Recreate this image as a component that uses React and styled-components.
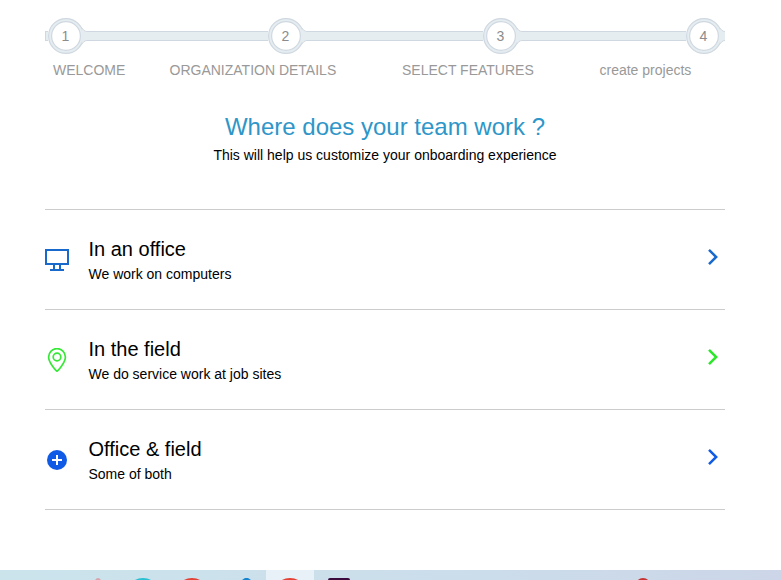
import React from "react";
import styled, { createGlobalStyle } from "styled-components";

const Global = createGlobalStyle`
  * { box-sizing: border-box; }
  body { margin: 0; background: #fff; font-family: "Liberation Sans", Arial, sans-serif; }
`;

const Page = styled.div`
  height: 580px;
  display: flex;
  flex-direction: column;
  overflow: hidden;
`;

const Content = styled.main`
  width: 680px;
  margin-left: 45px;
  padding-top: 18px;
  flex: 1;
`;

const Track = styled.div`
  display: flex;
  align-items: center;
  height: 36px;
`;

const Bar = styled.div`
  flex: none;
  height: 10px;
  width: ${(p) => p.$width}px;
  background: #e6edf1;
  border: solid #cfd8e0;
  border-width: 1px 0;
  border-left-width: ${(p) => (p.$start ? "1px" : 0)};
`;

const Marker = styled.div`
  position: relative;
  width: 39px;
  height: 36px;
  flex: none;
`;

const MarkerShape = styled.svg`
  display: block;
`;

const MarkerNumber = styled.span`
  position: absolute;
  inset: 0 4px 0 0;
  text-align: center;
  font-size: 14px;
  line-height: 36px;
  color: #8c8c8c;
`;

const Labels = styled.div`
  display: flex;
  height: 32px;
  font-size: 14px;
  line-height: 32px;
  color: #999;
  white-space: nowrap;
`;

const Label = styled.span`
  width: ${(p) => p.$width}px;
  margin-left: ${(p) => p.$gap}px;
`;

const Heading = styled.h1`
  margin: 26px 0 0;
  font-size: 24px;
  line-height: 30px;
  font-weight: 400;
  text-align: center;
  color: #2e96c8;
`;

const Subheading = styled.p`
  margin: 5px 0 0;
  font-size: 14px;
  line-height: 16px;
  text-align: center;
  color: #000;
`;

const Options = styled.div`
  margin-top: 46px;
  border-top: 1px solid #ccc;
`;

const Option = styled.div`
  display: flex;
  height: 100px;
  border-bottom: 1px solid #ccc;
`;

const IconBox = styled.div`
  width: 24px;
  height: 24px;
  margin: 38px 19.5px 0 0;
  svg { display: block; }
`;

const OptionText = styled.div`
  flex: 1;
  padding-top: 27px;
  color: #000;
`;

const OptionTitle = styled.div`
  font-size: 20px;
  line-height: 24px;
`;

const OptionDetail = styled.div`
  margin-top: 5px;
  font-size: 14px;
  line-height: 16px;
`;

const Chevron = styled.svg`
  margin: 38px 6px 0 0;
  flex: none;
`;

const Taskbar = styled.footer`
  display: flex;
  height: 10px;
  padding-left: 70px;
  background: linear-gradient(90deg, #cbe4ec, #cbdfeb 45%, #ccd6e8);
`;

const TaskSlot = styled.div`
  width: 48px;
  margin-left: ${(p) => p.$gap ?? 1}px;
  background: ${(p) => (p.$active ? "#e8f1f8" : "transparent")};
  svg { display: block; }
`;

function StepMarker({ n }) {
  return (
    <Marker>
      <MarkerShape width="39" height="36" viewBox="0 0 39 36">
        <circle cx="18" cy="18" r="17.4" fill="#e6edf1" stroke="#cfd8e1" strokeWidth="1.2" />
        <path d="M33.5 10C35 11.5 36.5 13.5 39 13.5V22.5C36.5 22.5 35 24.5 33.5 26Z" fill="#e6edf1" />
        <path d="M33.5 9.5C35 11.5 36.5 13.5 39 13.5M39 22.5C36.5 22.5 35 24.5 33.5 26.5" fill="none" stroke="#cfd8e1" />
        <circle cx="18" cy="18" r="14.4" fill="#fff" stroke="#cfd8e1" strokeWidth="1.2" />
      </MarkerShape>
      <MarkerNumber>{n}</MarkerNumber>
    </Marker>
  );
}

const Monitor = () => (
  <svg width="24" height="24" viewBox="0 0 24 24" fill="#176acb">
    <path fillRule="evenodd" d="M0 1H24V17H16V21H19V23H5V21H8V17H0ZM2 3V15H22V3ZM10 17V21H14V17Z" />
  </svg>
);

const Pin = () => (
  <svg width="24" height="24" viewBox="0 0 24 24" fill="none" stroke="#36e836" strokeWidth="1.7">
    <path d="M12 23.2C10.5 22.5 3.6 14.2 3.6 9A8.4 8.4 0 0 1 20.4 9C20.4 14.2 13.5 22.5 12 23.2Z" />
    <circle cx="12" cy="9" r="3.8" />
  </svg>
);

const Plus = () => (
  <svg width="24" height="24" viewBox="0 0 24 24">
    <circle cx="12" cy="12" r="10" fill="#105be6" />
    <path d="M7 12H17M12 7V17" stroke="#fff" strokeWidth="2" />
  </svg>
);

const options = [
  { title: "In an office", detail: "We work on computers", icon: <Monitor />, color: "#176acb" },
  { title: "In the field", detail: "We do service work at job sites", icon: <Pin />, color: "#2be62b" },
  { title: "Office & field", detail: "Some of both", icon: <Plus />, color: "#105be6" },
];

const Dome = ({ color, x = 24, rx = 11 }) => (
  <svg width="48" height="10" viewBox="0 0 48 10">
    <ellipse cx={x} cy="19" rx={rx} ry="11" fill={color} />
  </svg>
);

export default function App() {
  return (
    <Page>
      <Global />
      <Content>
        <Track>
          <Bar $width={3} $start />
          <StepMarker n={1} />
          <Bar $width={181} />
          <StepMarker n={2} />
          <Bar $width={176} />
          <StepMarker n={3} />
          <Bar $width={164} />
          <StepMarker n={4} />
        </Track>
        <Labels>
          <Label $width={73} $gap={8}>WELCOME</Label>
          <Label $width={167} $gap={43.5}>ORGANIZATION DETAILS</Label>
          <Label $width={132} $gap={65.5}>SELECT FEATURES</Label>
          <Label $width={92} $gap={65.5}>create projects</Label>
        </Labels>
        <Heading>Where does your team work ?</Heading>
        <Subheading>This will help us customize your onboarding experience</Subheading>
        <Options>
          {options.map((o) => (
            <Option key={o.title}>
              <IconBox>{o.icon}</IconBox>
              <OptionText>
                <OptionTitle>{o.title}</OptionTitle>
                <OptionDetail>{o.detail}</OptionDetail>
              </OptionText>
              <Chevron width="12" height="18" viewBox="0 0 12 18" fill="none" stroke={o.color} strokeWidth="2.5">
                <path d="M2 1.8L9.2 9L2 16.2" />
              </Chevron>
            </Option>
          ))}
        </Options>
      </Content>
      <Taskbar>
        <TaskSlot $gap={0}><Dome color="#d9a3ad" x={28} rx={5} /></TaskSlot>
        <TaskSlot><Dome color="#2bbfd3" rx={14} /></TaskSlot>
        <TaskSlot><Dome color="#e44134" rx={14} /></TaskSlot>
        <TaskSlot>
          <svg width="48" height="10" viewBox="0 0 48 10"><path d="M25 10L28 8H31L34 10Z" fill="#1685cf" /></svg>
        </TaskSlot>
        <TaskSlot $active><Dome color="#e44134" rx={14} /></TaskSlot>
        <TaskSlot>
          <svg width="48" height="10" viewBox="0 0 48 10"><rect x="13" y="8" width="22" height="6" rx="2" fill="#3a0a3c" /></svg>
        </TaskSlot>
        <TaskSlot $gap={256}><Dome color="#c83232" rx={9} /></TaskSlot>
      </Taskbar>
    </Page>
  );
}
